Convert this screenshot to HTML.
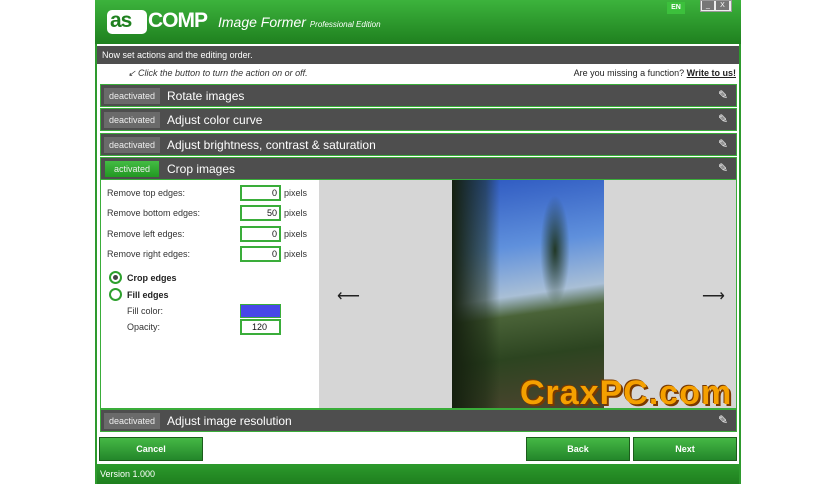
<!DOCTYPE html>
<html><head><style>
*{margin:0;padding:0;box-sizing:border-box}
body{width:836px;height:484px;background:#fff;font-family:"Liberation Sans",sans-serif;position:relative;overflow:hidden;font-size:9px}
.a{position:absolute}
.win{left:95px;top:0;width:646px;height:484px;background:#fff;border-left:2px solid #2e9a2e;border-right:2px solid #2e9a2e}
.hdr{left:95px;top:0;width:646px;height:44px;background:linear-gradient(#3cb33c,#1f801f)}
.row{position:absolute;left:100px;width:637px;height:23px;background:#4e4e4e;border:1px solid #3aad3a;color:#fff}
.row .b{position:absolute;left:3px;top:3px;width:56px;text-align:center;height:16px;background:#6a6a6a;color:#eee;font-size:9px;line-height:16px}
.row .t{position:absolute;left:66px;top:4px;font-size:12px}
.row .p{position:absolute;right:8px;top:3px;color:#fff;font-size:12px}
.lbl{position:absolute;left:107px;color:#333}
.in{position:absolute;left:240px;width:41px;height:16px;border:2px solid #3aad3a;text-align:right;padding-right:2px;line-height:12px;color:#111}
.px{position:absolute;left:284px;color:#333}
.btn{position:absolute;top:437px;height:24px;background:linear-gradient(#45b845,#23862a);border:1px solid #1c5c1c;color:#fff;text-align:center;line-height:22px;font-weight:bold;font-size:9px}
</style></head><body>
<div class="a win"></div>
<div class="a hdr"></div>
<div class="a" style="left:107px;top:10px;width:40px;height:24px;background:#fff;border-radius:5px"></div>
<div class="a" style="left:110px;top:9px;font:bold 21px 'Liberation Sans',sans-serif;color:#1f801f;letter-spacing:-1px">as</div>
<div class="a" style="left:148px;top:9px;font:bold 21px 'Liberation Sans',sans-serif;color:#fff;letter-spacing:-1px">COMP</div>
<div class="a" style="left:218px;top:14px;font:italic 14px 'Liberation Sans',sans-serif;color:#fff">Image Former <span style="font-size:8px">Professional Edition</span></div>
<div class="a" style="left:667px;top:2px;width:18px;height:12px;background:#3cc03c;color:#fff;font-size:7px;font-weight:bold;text-align:center;line-height:12px">EN</div>
<div class="a" style="left:700px;top:0;width:32px;height:12px;background:#eee;border:1px solid #999"></div>
<div class="a" style="left:702px;top:1px;width:12px;height:9px;background:#777;color:#fff;font-size:7px;text-align:center;line-height:9px">_</div>
<div class="a" style="left:716px;top:1px;width:13px;height:9px;background:#777;color:#fff;font-size:7px;text-align:center;line-height:9px">X</div>
<div class="a" style="left:97px;top:46px;width:642px;height:18px;background:#4e4e4e;color:#fff;line-height:18px;padding-left:5px">Now set actions and the editing order.</div>
<div class="a" style="left:128px;top:68px;color:#333;font-style:italic">↙ Click the button to turn the action on or off.</div>
<div class="a" style="right:100px;top:68px;color:#222">Are you missing a function? <b style="text-decoration:underline">Write to us!</b></div>
<div class="row" style="top:84px"><span class="b">deactivated</span><span class="t">Rotate images</span><span class="p">✎</span></div>
<div class="row" style="top:108px"><span class="b">deactivated</span><span class="t">Adjust color curve</span><span class="p">✎</span></div>
<div class="row" style="top:133px"><span class="b">deactivated</span><span class="t">Adjust brightness, contrast &amp; saturation</span><span class="p">✎</span></div>
<div class="row" style="top:157px"><span class="b" style="background:linear-gradient(#44bb44,#229922);left:4px;width:54px">activated</span><span class="t">Crop images</span><span class="p">✎</span></div>
<div class="a" style="left:100px;top:180px;width:637px;height:229px;border:1px solid #3aad3a;border-top:none;background:#fff"></div>
<div class="a" style="left:319px;top:180px;width:417px;height:228px;background:#d6d6d6"></div>
<div class="a" style="left:452px;top:180px;width:152px;height:228px;background:linear-gradient(172deg,#2d58c0 0%,#5f90dc 30%,#a9bfd6 50%,#4a6338 58%,#2c4420 75%,#4e4430 100%)"></div>
<div class="a" style="left:452px;top:180px;width:48px;height:228px;background:linear-gradient(90deg,#15200f,rgba(25,40,18,0.5) 70%,rgba(25,40,18,0))"></div>
<div class="a" style="left:540px;top:195px;width:30px;height:110px;background:radial-gradient(ellipse,rgba(25,45,18,0.9),rgba(25,45,18,0) 70%)"></div>
<div class="a" style="left:337px;top:286px;font-size:16px;color:#222">⟵</div>
<div class="a" style="left:702px;top:286px;font-size:16px;color:#222">⟶</div>
<div class="lbl" style="top:188px">Remove top edges:</div><div class="in" style="top:185px">0</div><div class="px" style="top:188px">pixels</div>
<div class="lbl" style="top:208px">Remove bottom edges:</div><div class="in" style="top:205px">50</div><div class="px" style="top:208px">pixels</div>
<div class="lbl" style="top:229px">Remove left edges:</div><div class="in" style="top:226px">0</div><div class="px" style="top:229px">pixels</div>
<div class="lbl" style="top:249px">Remove right edges:</div><div class="in" style="top:246px">0</div><div class="px" style="top:249px">pixels</div>
<div class="a" style="left:109px;top:271px;width:13px;height:13px;border:2px solid #2ea02e;border-radius:50%"><div style="margin:2px;width:5px;height:5px;background:#444;border-radius:50%"></div></div>
<div class="a" style="left:127px;top:273px;font-weight:bold;color:#222">Crop edges</div>
<div class="a" style="left:109px;top:288px;width:13px;height:13px;border:2px solid #2ea02e;border-radius:50%"></div>
<div class="a" style="left:127px;top:290px;font-weight:bold;color:#222">Fill edges</div>
<div class="lbl" style="left:127px;top:306px">Fill color:</div>
<div class="a" style="left:240px;top:304px;width:41px;height:14px;background:#4747e8;border:1px solid #3aad3a"></div>
<div class="lbl" style="left:127px;top:322px">Opacity:</div><div class="in" style="top:319px;padding-right:12px">120</div>
<div class="row" style="top:409px"><span class="b">deactivated</span><span class="t">Adjust image resolution</span><span class="p">✎</span></div>
<div class="btn" style="left:99px;width:104px">Cancel</div>
<div class="btn" style="left:526px;width:104px">Back</div>
<div class="btn" style="left:633px;width:104px">Next</div>
<div class="a" style="left:97px;top:464px;width:642px;height:20px;background:linear-gradient(#2c9a2c,#1f7f1f);color:#fff;line-height:20px;padding-left:3px">Version 1.000</div>
<div class="a" style="left:520px;top:374px;font:bold 34px 'Liberation Sans',sans-serif;color:#f5a000;text-shadow:2px 2px 0 #7a3a00,-1px -1px 0 #7a3a00;letter-spacing:1px">CraxPC.com</div>
</body></html>
